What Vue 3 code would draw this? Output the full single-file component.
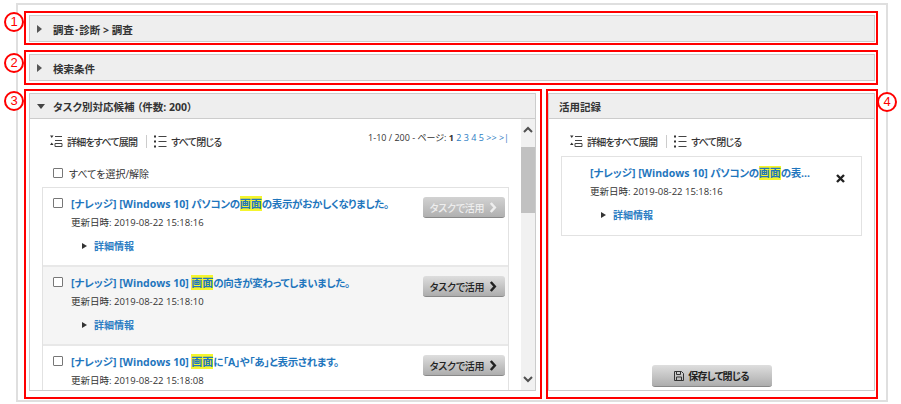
<script setup>
const rows = [
  { pre: 'パソコンの', after: 'の表示がおかしくなりました。', time: '2019-08-22 15:18:16', disabled: true, detail: true },
  { pre: '', after: 'の向きが変わってしまいました。', time: '2019-08-22 15:18:10', disabled: false, detail: true, alt: true },
  { pre: '', after: 'に「A」や「あ」と表示されます。', time: '2019-08-22 15:18:08', disabled: false, detail: false }
]
</script>

<template>
  <div class="frame">
    <div class="mark top">
      <span class="num n1">1</span>
      <div class="bar"><i class="tri right"></i><b>調査･診断 &gt; 調査</b></div>
    </div>
    <div class="mark second">
      <span class="num n2">2</span>
      <div class="bar"><i class="tri right"></i><b>検索条件</b></div>
    </div>
    <div class="columns">
      <div class="mark left">
        <span class="num n3">3</span>
        <section class="panel">
          <header class="head"><i class="tri down"></i><b>タスク別対応候補 （件数: 200）</b></header>
          <div class="body">
            <div class="main">
              <div class="tools">
                <svg class="ico" viewBox="0 0 13 13" width="13" height="13"><path d="M0 0.500h3.500l-1.750 2.500zM0 10l3.500 0-1.750-2.500z" fill="#333"/><path d="M5 1.500h7M5 5.500h7M5 8.500h7v3H5z" fill="none" stroke="#444"/></svg>
                <span class="tool-text">詳細をすべて展開</span>
                <span class="sep"></span>
                <svg class="ico" viewBox="0 0 13 13" width="13" height="13"><path d="M0 0.500h2v2H0zM0 5.500h2v2H0zM0 10.500h2v2H0z" fill="#333"/><path d="M4.500 1.500h8M4.500 6.500h8M4.500 11.500h8" stroke="#444"/></svg>
                <span class="tool-text">すべて閉じる</span>
                <span class="pager">1-10 / 200 - ページ: <b>1</b> <a>2</a> <a>3</a> <a>4</a> <a>5</a> <a>&gt;&gt;</a> <a>&gt;|</a></span>
              </div>
              <label class="all"><i class="check"></i>すべてを選択/解除</label>
              <div class="list">
                <article v-for="r in rows" :key="r.time" class="row" :class="{ alt: r.alt }">
                  <i class="check"></i>
                  <div class="info">
                    <p class="title">[ナレッジ] [Windows 10] <span class="jp">{{ r.pre }}</span><mark>画面</mark><span class="jp">{{ r.after }}</span></p>
                    <p class="date">更新日時: {{ r.time }}</p>
                    <p v-if="r.detail" class="more"><i class="tri small"></i><a>詳細情報</a></p>
                  </div>
                  <button class="btn use" :class="{ off: r.disabled }"><span class="label">タスクで活用</span>
                    <svg viewBox="0 0 9 11" width="9" height="11"><path d="M1.800 1l4 4.500-4 4.500" fill="none" stroke="currentColor" stroke-width="2.500"/></svg>
                  </button>
                </article>
              </div>
            </div>
            <div class="scroll">
              <svg viewBox="0 0 14 10" width="14" height="10"><path d="M3 7l4-4 4 4" fill="none" stroke="#505050" stroke-width="2"/></svg>
              <div class="track"><div class="thumb"></div></div>
              <svg viewBox="0 0 14 10" width="14" height="10"><path d="M3 3l4 4 4-4" fill="none" stroke="#505050" stroke-width="2"/></svg>
            </div>
          </div>
        </section>
      </div>
      <div class="mark rightbox">
        <span class="num n4">4</span>
        <section class="panel">
          <header class="head plain"><b>活用記録</b></header>
          <div class="rbody">
            <div class="tools rtools">
              <svg class="ico" viewBox="0 0 13 13" width="13" height="13"><path d="M0 0.500h3.500l-1.750 2.500zM0 10l3.500 0-1.750-2.500z" fill="#333"/><path d="M5 1.500h7M5 5.500h7M5 8.500h7v3H5z" fill="none" stroke="#444"/></svg>
              <span class="tool-text">詳細をすべて展開</span>
              <span class="sep"></span>
              <svg class="ico" viewBox="0 0 13 13" width="13" height="13"><path d="M0 0.500h2v2H0zM0 5.500h2v2H0zM0 10.500h2v2H0z" fill="#333"/><path d="M4.500 1.500h8M4.500 6.500h8M4.500 11.500h8" stroke="#444"/></svg>
              <span class="tool-text">すべて閉じる</span>
            </div>
            <article class="card">
              <div class="info">
                <p class="title clip">[ナレッジ] [Windows 10] <span class="jp">パソコンの</span><mark>画面</mark><span class="jp">の表</span>...</p>
                <p class="date">更新日時: 2019-08-22 15:18:16</p>
                <p class="more"><i class="tri small"></i><a>詳細情報</a></p>
              </div>
              <svg class="x" viewBox="0 0 9 9" width="9" height="9"><path d="M1 1l7 7M8 1l-7 7" stroke="#222" stroke-width="2.400"/></svg>
            </article>
            <button class="btn save">
              <svg viewBox="0 0 10 10" width="10" height="10"><path d="M.5.500h7l2 2v7h-9zM2.500.500v3h4v-3M2.500 9.500V6h5v3.500" fill="none" stroke="#333"/></svg>
              <span class="label">保存して閉じる</span>
            </button>
          </div>
        </section>
      </div>
    </div>
  </div>
</template>

<style scoped>
.frame {
  box-sizing: border-box;
  width: 872px;
  height: 399px;
  margin: 3px 0 0 16px;
  padding: 6px 8px 1px 6px;
  border: 2px solid #dfdfdf;
  display: flex;
  flex-direction: column;
  font-family: "Open Sans", "Noto Sans CJK JP", sans-serif;
  font-feature-settings: "palt";
  font-size: 10px;
  color: #333;
  background: #fff;
}
.mark {
  position: relative;
  box-sizing: border-box;
  border: 2px solid #f00;
}
.top { height: 34px; padding: 2px 1px 1px 3px; }
.second { height: 35px; margin-top: 5px; padding: 2px 1px 2px 3px; }
.columns { display: flex; height: 310px; margin-top: 4px; gap: 4px; }
.left { width: 518px; padding: 2px 4px 6px 3px; }
.rightbox { width: 332px; padding: 2px 1px 6px 0; }
.num {
  position: absolute;
  box-sizing: border-box;
  width: 20px;
  height: 20px;
  border: 2px solid #f00;
  border-radius: 50%;
  background: #fff;
  color: #f00;
  font: 13px/16px "Liberation Sans", sans-serif;
  text-align: center;
  z-index: 2;
}
.n1 { left: -22px; top: -1px; }
.n2 { left: -22px; top: 1px; }
.n3 { left: -22px; top: 0; }
.n4 { right: -21px; top: 1px; }
.bar {
  box-sizing: border-box;
  height: 100%;
  display: flex;
  align-items: center;
  padding: 1px 0 0 7px;
  background: #eee;
  border: 1px solid #ccc;
  font-size: 10.500px;
}
.tri { display: block; width: 0; height: 0; flex: none; border-style: solid; border-color: transparent; }
.tri.right { border-width: 4px 0 4px 5px; border-left-color: #555; margin-right: 11px; }
.tri.down { border-width: 5px 4.500px 0; border-top-color: #444; margin-right: 8px; }
.tri.small { border-width: 3.500px 0 3.500px 5px; border-left-color: #333; margin-right: 7px; }
.panel {
  box-sizing: border-box;
  height: 100%;
  display: flex;
  flex-direction: column;
  border: 1px solid #ccc;
}
.head {
  flex: none;
  box-sizing: border-box;
  height: 25px;
  display: flex;
  align-items: center;
  padding-left: 7px;
  background: #eee;
  border-bottom: 1px solid #ccc;
  font-size: 10.500px;
}
.head.plain { padding-left: 10px; }
.body { flex: 1; min-height: 0; display: flex; overflow: hidden; }
.main { flex: 1; min-width: 0; padding: 0 12px; overflow: hidden; }
.tools { display: flex; align-items: center; height: 44px; padding-left: 8px; }
.ico { flex: none; margin-right: 4px; }
.tool-text { font-size: 10px; font-weight: 500; letter-spacing: -0.8px; }
.sep { width: 1px; height: 13px; background: #ccc; margin: 0 7px 0 9px; }
.pager { margin-left: auto; font-size: 9px; margin-top: -8px; }
.pager a, .more a { color: #2c7dc3; }
.all { display: flex; align-items: center; height: 16px; margin: 2px 0 0 11px; gap: 6px; font-size: 10px; }
.check {
  display: block;
  flex: none;
  box-sizing: border-box;
  width: 10px;
  height: 10px;
  border: 1px solid #777;
  border-radius: 1px;
  background: #fff;
}
.list { margin-top: 6px; border: 1px solid #e2e2e2; border-bottom: 0; }
.row {
  box-sizing: border-box;
  height: 79px;
  display: flex;
  padding: 10px 3px 0 10px;
  border-bottom: 2px solid #e8e8e8;
}
.row.alt { background: #f5f5f5; }
.info { flex: 1; min-width: 0; padding-left: 8px; }
.row .info { margin-top: -1px; }
p { margin: 0; }
.title {
  color: #1f76bd;
  font-size: 10.500px;
  font-weight: 700;
  line-height: 14px;
  white-space: nowrap;
}
.jp { letter-spacing: -0.35px; }
mark { background: #f5f52e; color: #1f76bd; font-size: 11px; }
.date { margin-top: 5px; line-height: 13px; font-size: 9.500px; }
.more { display: flex; align-items: center; margin: 10px 0 0 11px; font-size: 10px; font-weight: 700; line-height: 14px; }
.btn {
  box-sizing: border-box;
  display: flex;
  align-items: center;
  justify-content: center;
  gap: 5px;
  border: 0;
  border-bottom: 1px solid #888;
  border-radius: 3px;
  background: linear-gradient(#dedede, #adadad);
  color: #222;
  font: 500 10px "Open Sans", "Noto Sans CJK JP", sans-serif;
  font-feature-settings: "palt";
  padding: 0;
}
.label { letter-spacing: -0.2px; }
.use { flex: none; width: 82px; height: 21px; margin-top: -1px; }
.off { color: #eee; background: linear-gradient(#d2d2d2, #b0b0b0); }
.scroll { flex: none; width: 14px; display: flex; flex-direction: column; background: #f1f1f1; }
.scroll svg { flex: none; margin: 6px 0 0; }
.scroll svg:last-child { margin: 0 0 6px; }
.track { flex: 1; padding-top: 12px; }
.thumb { height: 66px; background: #c1c1c1; }
.rbody { flex: 1; min-height: 0; display: flex; flex-direction: column; padding: 0 12px; }
.rtools { box-sizing: border-box; height: 37px; padding: 8px 0 0 9px; flex: none; }
.card {
  flex: none;
  box-sizing: border-box;
  height: 80px;
  display: flex;
  align-items: flex-start;
  padding: 9px 0 0 20px;
  border: 1px solid #e2e2e2;
}
.card .info { padding-left: 8px; }
.clip { width: 222px; overflow: hidden; }
.x { flex: none; margin: 8px 16px 0 0; }
.save { width: 120px; height: 22px; margin: auto auto 3px; gap: 4px; }
.save .label { letter-spacing: -0.7px; font-weight: 600; }
</style>

<style>
html, body { background: #fff; }
</style>
